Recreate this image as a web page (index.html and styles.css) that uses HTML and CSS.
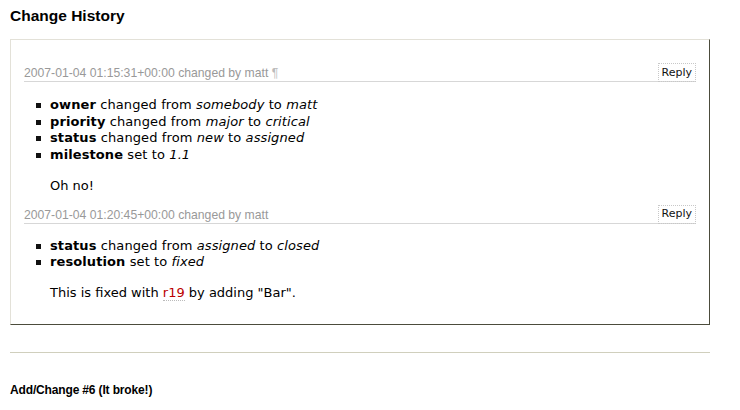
FILE: index.html
```html
<!DOCTYPE html>
<html>
<head>
<meta charset="utf-8">
<link rel="stylesheet" href="styles.css">
</head>
<body>
<div class="page">
  <h2 class="title">Change History</h2>
  <div class="changelog">
    <div class="change">
      <h3 class="change-head">
        <span class="change-meta">2007-01-04 01:15:31+00:00 changed by matt <span class="anchor">¶</span></span>
        <button class="reply" type="button">Reply</button>
      </h3>
      <ul class="changes">
        <li><strong>owner</strong> changed from <em>somebody</em> to <em>matt</em></li>
        <li><strong>priority</strong> changed from <em>major</em> to <em>critical</em></li>
        <li><strong>status</strong> changed from <em>new</em> to <em>assigned</em></li>
        <li><strong>milestone</strong> set to <em>1.1</em></li>
      </ul>
      <div class="comment"><p>Oh no!</p></div>
    </div>
    <div class="change">
      <h3 class="change-head">
        <span class="change-meta">2007-01-04 01:20:45+00:00 changed by matt</span>
        <button class="reply" type="button">Reply</button>
      </h3>
      <ul class="changes">
        <li><strong>status</strong> changed from <em>assigned</em> to <em>closed</em></li>
        <li><strong>resolution</strong> set to <em>fixed</em></li>
      </ul>
      <div class="comment"><p>This is fixed with <a class="changeset" href="#">r19</a> by adding "Bar".</p></div>
    </div>
  </div>
  <hr class="sep">
  <h3 class="form-title">Add/Change #6 (It broke!)</h3>
</div>
</body>
</html>
```

FILE: styles.css
```css
html, body {
  margin: 0;
  padding: 0;
  background: #fff;
}

body {
  font-family: "DejaVu Sans", Verdana, sans-serif;
  font-size: 13px;
  color: #000;
}

.page {
  width: 700px;
  margin-left: 10px;
  padding-top: 7px;
}

.title {
  font-family: "Liberation Sans", Arial, sans-serif;
  font-size: 15.5px;
  font-weight: bold;
  line-height: 18px;
  margin: 0 0 14px;
}

.changelog {
  border: 1px solid;
  border-color: #e3e1d8 #4c4c3c #4c4c3c #e3e1d8;
  padding: 14px 13px 10px;
}

.change-head {
  display: flex;
  justify-content: space-between;
  align-items: flex-end;
  height: 15px;
  margin: 13px 0 0;
  border-bottom: 1px solid #d7d7d7;
  font-family: "Liberation Sans", Arial, sans-serif;
  font-size: 12.2px;
  font-weight: normal;
  color: #999;
  line-height: 15px;
}

.change:first-child .change-head {
  margin-top: 12px;
}

.change-meta {
  white-space: nowrap;
}

.anchor {
  color: #bbb;
}

.reply {
  height: 19px;
  margin: 0 0 -1px;
  padding: 0 3px;
  border: 1px dotted #c8c8c8;
  background: transparent;
  font-family: "DejaVu Sans", Verdana, sans-serif;
  font-size: 11px;
  line-height: 16px;
  color: #111;
}

.changes {
  list-style: none;
  margin: 15px 0 13px 26px;
  padding: 0;
  line-height: 16.7px;
  letter-spacing: 0.1px;
}

.change + .change .changes {
  margin-top: 14px;
}

.changes li::before {
  content: "";
  display: inline-block;
  width: 5px;
  height: 5px;
  margin-left: -14px;
  margin-right: 9px;
  background: #111;
  vertical-align: middle;
}

.comment {
  margin-left: 26px;
}

.comment p {
  margin: 14px 0 12px;
  line-height: 16.7px;
}

.changeset {
  color: #b00;
  text-decoration: none;
  border-bottom: 1px dotted #bbb;
}

.sep {
  border: none;
  border-top: 1px solid #d0cfbd;
  margin: 27px 0 0;
  height: 0;
}

.form-title {
  font-family: "Liberation Sans", Arial, sans-serif;
  font-size: 12px;
  font-weight: bold;
  line-height: 15px;
  letter-spacing: -0.15px;
  margin: 30px 0 0;
}
```
